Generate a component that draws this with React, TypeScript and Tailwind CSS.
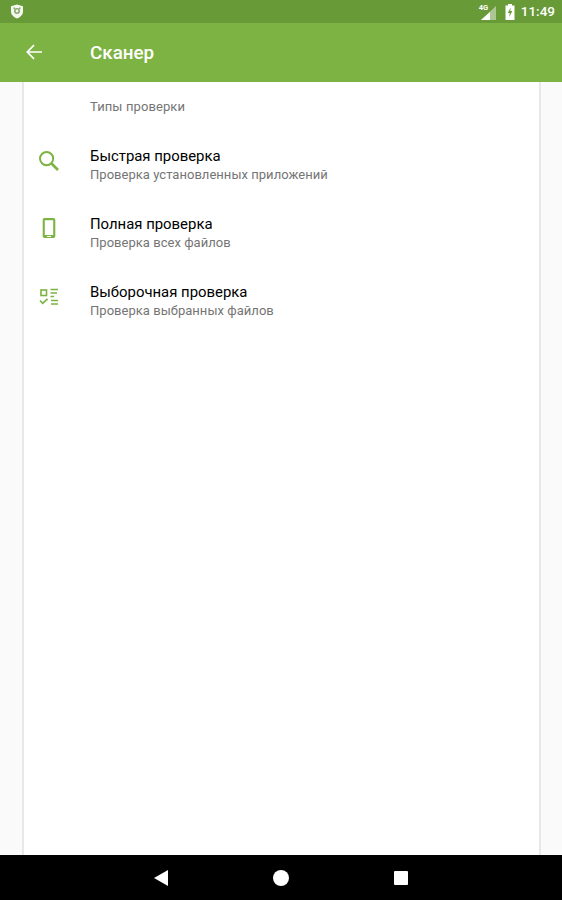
import React from "react";

function Row({ icon, title, sub }: { icon: React.ReactNode; title: string; sub: string }) {
  return (
    <div className="flex h-[68px] items-center">
      <div className="flex w-[66px] justify-center pb-[9px] pr-[16px]">{icon}</div>
      <div className="flex flex-col">
        <span className="text-[14.900px] leading-[19px] text-black">{title}</span>
        <span className="text-[13px] leading-[18px] tracking-[0.03px] text-[#757575]">{sub}</span>
      </div>
    </div>
  );
}

export default function App() {
  return (
    <div className="flex h-[900px] w-[562px] flex-col overflow-hidden bg-[#fafafa] font-['Roboto',sans-serif]">
      <div className="flex h-[23px] items-center justify-between bg-[#689a38] pl-[10px] pr-[7px]">
        <svg width="14" height="15" viewBox="0 0 14 15">
          <path d="M7 .5 L13 2.200 V7.500 C13 11 10 13.300 7 14.500 C4 13.300 1 11 1 7.500 V2.200 Z" fill="#f4f7ee" />
          <circle cx="7" cy="7" r="3" fill="#8aa870" />
          <circle cx="7" cy="7" r="1.400" fill="#f4f7ee" />
          <path d="M3.500 3.500h1.500v1.500H3.500zM9 3.500h1.500v1.500H9z" fill="#8aa870" />
        </svg>
        <div className="flex items-center">
          <div className="relative mr-[7px] h-[16px] w-[17px]">
            <svg width="17" height="14" viewBox="0 0 17 14" className="absolute left-0 top-[2px]">
              <path d="M15 0V14H0Z" fill="#fff" fillOpacity="0.45" />
              <path d="M9 6V14H0Z" fill="#fff" />
            </svg>
            <span className="absolute left-[-2px] top-[-1px] text-[7.500px] font-bold leading-[9px] text-white">4G</span>
          </div>
          <svg width="10" height="16" viewBox="0 0 10 16" className="mr-[6px]">
            <path d="M3 0h4v1.500h2.500V16H.5V1.500H3Z" fill="#fff" />
            <path d="M5.800 3.500 2.800 9h2L4.200 13 7.400 7H5.300Z" fill="#689a38" />
          </svg>
          <span className="text-[13.500px] font-medium leading-[23px] text-white">11:49</span>
        </div>
      </div>
      <div className="flex h-[59px] items-center bg-[#7cb342]">
        <svg width="16" height="16" viewBox="0 0 16 16" className="ml-[26px] mb-[1px]" fill="none" stroke="#fff" strokeWidth="1.700">
          <path d="M16 8H1.500M8 1.200 1.300 8 8 14.800" />
        </svg>
        <span className="ml-[48px] mt-[1px] text-[18.800px] font-medium text-white">Сканер</span>
      </div>
      <div className="ml-[22px] mr-[21px] flex flex-1 flex-col border-x-2 border-x-[#e8e8e8] bg-white">
        <div className="h-[49px] pl-[66px] pt-[16px] text-[13px] leading-[18px] tracking-[0.1px] text-[#757575]">Типы проверки</div>
        <Row
          title="Быстрая проверка"
          sub="Проверка установленных приложений"
          icon={
            <svg width="22" height="22" viewBox="0 0 22 22" fill="none" stroke="#7cb342">
              <circle cx="8.600" cy="8.600" r="6.600" strokeWidth="2" />
              <path d="M13.500 13.500 20 20" strokeWidth="2.600" />
            </svg>
          }
        />
        <Row
          title="Полная проверка"
          sub="Проверка всех файлов"
          icon={
            <svg width="14" height="22" viewBox="0 0 14 22" className="mt-[-2px]">
              <path
                fillRule="evenodd"
                d="M2.500 1h9A1.800 1.800 0 0 1 13.300 2.800v16.400A1.800 1.800 0 0 1 11.500 21h-9A1.800 1.800 0 0 1 .7 19.200V2.800A1.800 1.800 0 0 1 2.500 1ZM2.800 3.200V18h8.400V3.200Z"
                fill="#7cb342"
              />
              <rect x="5" y="19" width="4" height="1" fill="#fff" />
            </svg>
          }
        />
        <Row
          title="Выборочная проверка"
          sub="Проверка выбранных файлов"
          icon={
            <svg width="20" height="18" viewBox="0 0 20 18" fill="none" stroke="#7cb342">
              <rect x="2" y="2" width="5.500" height="5.500" strokeWidth="1.600" />
              <path d="M11.500 1.500H19M11.500 5H18M11.500 8.500H15M12 12.500H19M12 16H19" strokeWidth="1.600" />
              <path d="M1 12.500 3.700 15.300 8.500 10.800" strokeWidth="1.700" />
            </svg>
          }
        />
      </div>
      <div className="flex h-[45px] items-center bg-black">
        <svg width="14" height="16" viewBox="0 0 14 16" className="ml-[154px]">
          <path d="M14 0V16L0 8Z" fill="#fff" />
        </svg>
        <div className="ml-[105px] h-[16px] w-[16px] rounded-full bg-white" />
        <div className="ml-[105px] h-[14px] w-[14px] rounded-[1px] bg-white" />
      </div>
    </div>
  );
}
